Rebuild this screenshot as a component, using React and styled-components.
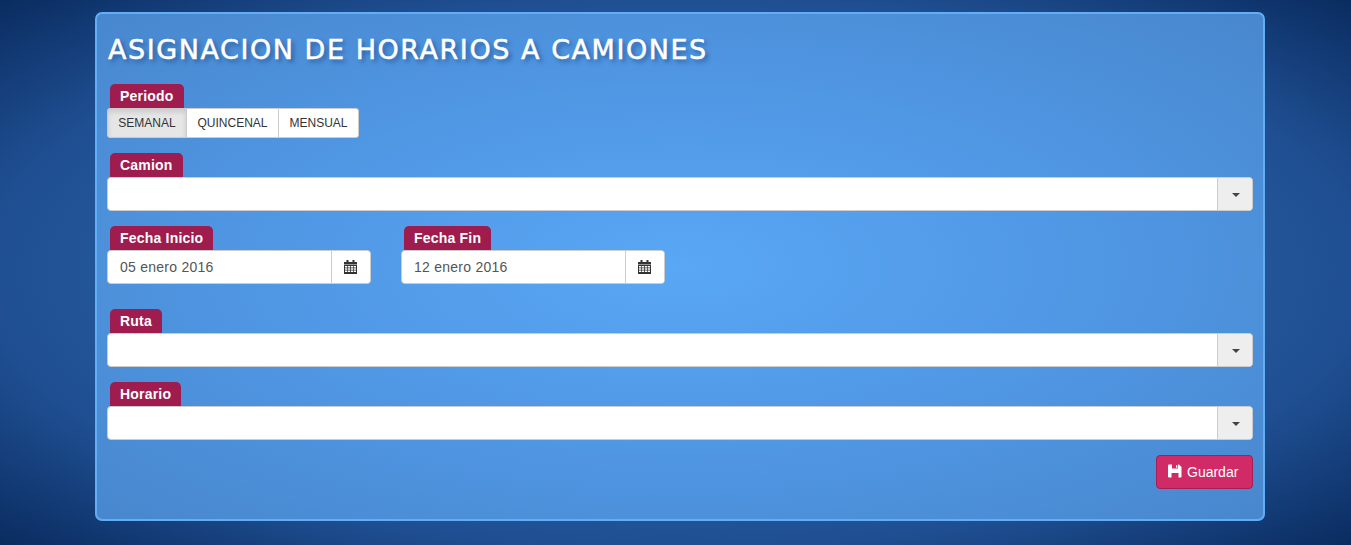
import styled, { createGlobalStyle } from "styled-components";

const GlobalStyle = createGlobalStyle`
  html, body {
    margin: 0;
    height: 100%;
  }
  body {
    font-family: "Liberation Sans", Arial, sans-serif;
    font-size: 14px;
    color: #333;
    background: #0a2c60;
  }
  * {
    box-sizing: border-box;
  }
`;

const Page = styled.div`
  width: 1351px;
  height: 545px;
  padding: 12px 86px 24px 95px;
  overflow: hidden;
  background: radial-gradient(ellipse farthest-corner at center, #5aa8f5 0%, #235599 60%, #1f4f92 72%, #0a2c60 100%);
`;

const Panel = styled.div`
  height: 509px;
  padding: 17px 10px 30px;
  border: 2px solid #62aef5;
  border-radius: 7px;
  background: radial-gradient(ellipse farthest-corner at center, #59a7f5 0%, #5097e4 50%, #4887cd 100%);
`;

const Title = styled.h1`
  margin: 0 0 17px 1px;
  height: 36px;
  font-family: "Comic Sans MS", "DejaVu Sans", sans-serif;
  font-size: 27px;
  font-weight: 400;
  line-height: 38px;
  letter-spacing: 1.55px;
  color: #fff;
  -webkit-text-stroke: 0.5px #fff;
  text-shadow: 3px 3px 4px rgba(20, 60, 120, 0.6);
`;

const Field = styled.div`
  margin-bottom: ${(p) => p.$gap ?? 15}px;
  width: ${(p) => (p.$width ? `${p.$width}px` : "auto")};
`;

const Tab = styled.div`
  display: flex;
  align-items: center;
  width: fit-content;
  height: 24px;
  margin-left: 3px;
  padding: 0 10px;
  border-radius: 5px 5px 0 0;
  background: #9e1c4e;
  color: #fff;
  font-size: 14px;
  font-weight: 700;
  letter-spacing: 0.2px;
`;

const Toggle = styled.div`
  display: flex;
  width: 252px;
  height: 30px;
`;

const ToggleButton = styled.div`
  flex: 0 0 ${(p) => p.$width}px;
  display: flex;
  align-items: center;
  justify-content: center;
  font-size: 12px;
  color: #333;
  background: ${(p) => (p.$active ? "#e6e6e6" : "#fff")};
  border: 1px solid #ccc;
  margin-left: ${(p) => (p.$first ? 0 : -1)}px;
  box-shadow: ${(p) => (p.$active ? "inset 0 3px 5px rgba(0, 0, 0, 0.125)" : "none")};
  border-radius: ${(p) => (p.$first ? "3px 0 0 3px" : p.$last ? "0 3px 3px 0" : "0")};
`;

const Combo = styled.div`
  display: flex;
  height: 34px;
  background: #fff;
  border: 1px solid #ccc;
  border-radius: 4px;
  overflow: hidden;
`;

const ComboText = styled.div`
  flex: 1;
  padding: 0 12px;
  font-size: 14px;
  line-height: 32px;
  letter-spacing: 0.25px;
  color: #555;
`;

const ComboButton = styled.div`
  flex: 0 0 ${(p) => (p.$calendar ? 39 : 35)}px;
  display: flex;
  align-items: center;
  justify-content: center;
  padding: ${(p) => (p.$calendar ? "0 2px 0 0" : "2px 0 0 2px")};
  border-left: 1px solid #ccc;
  background: ${(p) => (p.$calendar ? "#fff" : "#eee")};
`;

const Caret = styled.span`
  width: 0;
  height: 0;
  border-top: 4px solid #444;
  border-left: 4px solid transparent;
  border-right: 4px solid transparent;
`;

const DateRow = styled.div`
  display: flex;
  gap: 30px;
  margin-bottom: 25px;
`;

const Actions = styled.div`
  display: flex;
  justify-content: flex-end;
`;

const SaveButton = styled.div`
  display: flex;
  align-items: center;
  gap: 5px;
  width: 97px;
  height: 34px;
  padding-left: 11px;
  border: 1px solid #a51f52;
  border-radius: 4px;
  background: #d02a67;
  color: #fff;
  font-size: 14px;
`;

const SaveGlyph = styled.svg`
  margin-top: -3px;
`;

function CalendarIcon() {
  return (
    <svg width="13" height="14" viewBox="0 0 13 14" fill="#333">
      <rect x="2.5" y="0" width="2" height="3" />
      <rect x="8.5" y="0" width="2" height="3" />
      <path d="M0 2h13v2.5H0z" />
      <path fillRule="evenodd" d="M0 5h13v9H0z M1 6v1.5h2.300V6z M4 6v1.500h2.200V6z M7 6v1.500h2.200V6z M9.900 6v1.500H12V6z M1 8.200v1.600h2.300V8.200z M4 8.200v1.600h2.200V8.200z M7 8.200v1.600h2.200V8.200z M9.900 8.200v1.600H12V8.200z M1 10.500V12h2.300v-1.500z M4 10.500V12h2.200v-1.500z M7 10.500V12h2.200v-1.500z M9.900 10.500V12H12v-1.500z" />
    </svg>
  );
}

function SaveIcon() {
  return (
    <SaveGlyph width="14" height="14" viewBox="0 0 14 14" fill="#fff">
      <path
        fillRule="evenodd"
        d="M1 0.500h10l2.500 2.500v9.500a1 1 0 0 1-1 1h-11.500a1 1 0 0 1-1-1v-11a1 1 0 0 1 1-1z M4 0.500v4h6v-4z M8 1.200v2.500h1.300v-2.500z M3.500 9v4.500h7v-4.500z"
      />
    </SaveGlyph>
  );
}

function Select({ label }) {
  return (
    <Field>
      <Tab>{label}</Tab>
      <Combo>
        <ComboText />
        <ComboButton>
          <Caret />
        </ComboButton>
      </Combo>
    </Field>
  );
}

function DateField({ label, value }) {
  return (
    <Field $width={264} $gap={0}>
      <Tab>{label}</Tab>
      <Combo>
        <ComboText>{value}</ComboText>
        <ComboButton $calendar>
          <CalendarIcon />
        </ComboButton>
      </Combo>
    </Field>
  );
}

export default function App() {
  return (
    <Page>
      <GlobalStyle />
      <Panel>
        <Title>ASIGNACION DE HORARIOS A CAMIONES</Title>
        <Field>
          <Tab>Periodo</Tab>
          <Toggle>
            <ToggleButton $first $active $width={80}>SEMANAL</ToggleButton>
            <ToggleButton $width={93}>QUINCENAL</ToggleButton>
            <ToggleButton $last $width={81}>MENSUAL</ToggleButton>
          </Toggle>
        </Field>
        <Select label="Camion" />
        <DateRow>
          <DateField label="Fecha Inicio" value="05 enero 2016" />
          <DateField label="Fecha Fin" value="12 enero 2016" />
        </DateRow>
        <Select label="Ruta" />
        <Select label="Horario" />
        <Actions>
          <SaveButton>
            <SaveIcon />
            Guardar
          </SaveButton>
        </Actions>
      </Panel>
    </Page>
  );
}
